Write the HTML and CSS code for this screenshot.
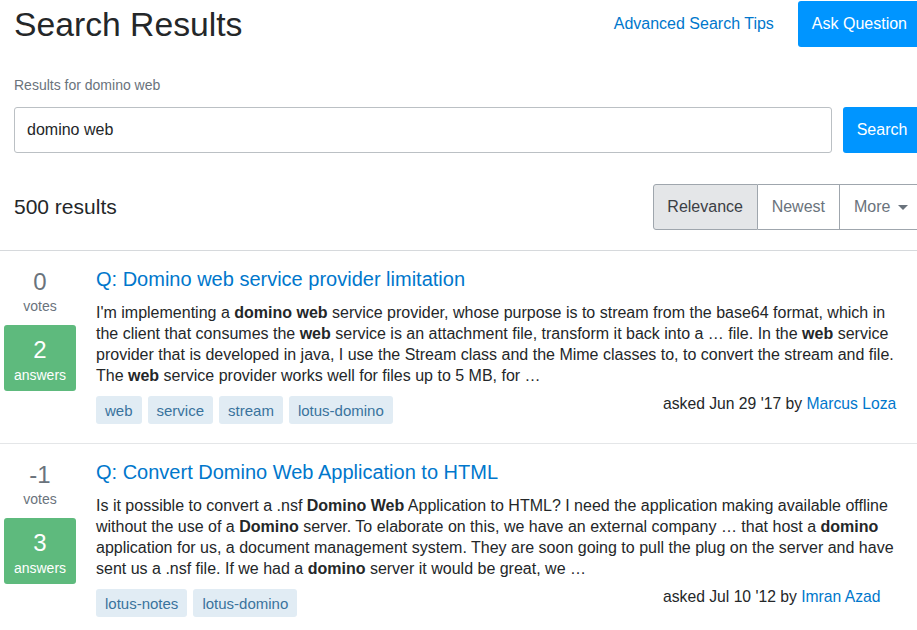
FILE: index.html
```html
<!DOCTYPE html>
<html>
<head>
<meta charset="utf-8">
<link rel="stylesheet" href="styles.css">
</head>
<body>
<div class="page">
  <div class="top">
    <header class="header">
      <h1 class="title">Search Results</h1>
      <div class="header-actions">
        <a class="tips" href="#">Advanced Search Tips</a>
        <a class="btn btn-primary" href="#">Ask Question</a>
      </div>
    </header>
    <div class="results-for">Results for domino web</div>
    <form class="search-form">
      <input class="search-input" type="text" value="domino web">
      <button class="btn btn-primary search-btn" type="button">Search</button>
    </form>
    <div class="count-row">
      <div class="count">500 results</div>
      <div class="sort-group">
        <span class="sort-item active">Relevance</span>
        <span class="sort-item">Newest</span>
        <span class="sort-item more">More <span class="caret"></span></span>
      </div>
    </div>
  </div>

  <div class="results">
    <div class="result">
      <div class="stats">
        <div class="votes-num">0</div>
        <div class="votes-label">votes</div>
        <div class="answers">
          <div class="answers-num">2</div>
          <div class="answers-label">answers</div>
        </div>
      </div>
      <div class="summary">
        <a class="q-title" href="#">Q: Domino web service provider limitation</a>
        <div class="excerpt">I'm implementing a <b>domino web</b> service provider, whose purpose is to stream from the base64 format, which in the client that consumes the <b>web</b> service is an attachment file, transform it back into a … file. In the <b>web</b> service provider that is developed in java, I use the Stream class and the Mime classes to, to convert the stream and file. The <b>web</b> service provider works well for files up to 5 MB, for …</div>
        <div class="meta">
          <div class="tags">
            <span class="tag">web</span>
            <span class="tag">service</span>
            <span class="tag">stream</span>
            <span class="tag">lotus-domino</span>
          </div>
          <div class="asked">asked Jun 29 '17 by <a class="user" href="#">Marcus Loza</a></div>
        </div>
      </div>
    </div>

    <div class="result">
      <div class="stats">
        <div class="votes-num">-1</div>
        <div class="votes-label">votes</div>
        <div class="answers">
          <div class="answers-num">3</div>
          <div class="answers-label">answers</div>
        </div>
      </div>
      <div class="summary">
        <a class="q-title" href="#">Q: Convert Domino Web Application to HTML</a>
        <div class="excerpt">Is it possible to convert a .nsf <b>Domino Web</b> Application to HTML? I need the application making available offline without the use of a <b>Domino</b> server. To elaborate on this, we have an external company … that host a <b>domino</b> application for us, a document management system. They are soon going to pull the plug on the server and have sent us a .nsf file. If we had a <b>domino</b> server it would be great, we …</div>
        <div class="meta">
          <div class="tags">
            <span class="tag">lotus-notes</span>
            <span class="tag">lotus-domino</span>
          </div>
          <div class="asked">asked Jul 10 '12 by <a class="user" href="#">Imran Azad</a></div>
        </div>
      </div>
    </div>
  </div>
</div>
</body>
</html>
```

FILE: styles.css
```css
html, body {
  margin: 0;
  padding: 0;
  background: #fff;
  overflow: hidden;
}
body {
  font-family: "Liberation Sans", Arial, sans-serif;
  color: #242729;
  font-size: 16px;
}
a { text-decoration: none; }

.page {
  width: 921px;
}
.top {
  padding-left: 14px;
}
.header {
  display: flex;
  justify-content: space-between;
  align-items: center;
  padding-top: 1px;
  height: 46px;
}
.title {
  margin: 0;
  font-weight: normal;
  font-size: 33.7px;
  line-height: 40px;
  color: #242729;
}
.header-actions {
  display: flex;
  align-items: center;
  gap: 24px;
}
.tips {
  color: #0077cc;
  font-size: 16px;
}
.btn {
  display: inline-flex;
  align-items: center;
  justify-content: center;
  box-sizing: border-box;
  height: 46px;
  padding: 0 14px;
  font-family: "Liberation Sans", Arial, sans-serif;
  font-size: 16px;
  border-radius: 3px 0 0 3px;
  border: 0;
}
.btn-primary {
  background: #0095ff;
  color: #fff;
}
.results-for {
  margin-top: 29px;
  font-size: 14px;
  line-height: 18px;
  color: #6a737c;
}
.search-form {
  display: flex;
  gap: 11px;
  margin: 13px 0 0;
}
.search-input {
  flex: 1;
  box-sizing: border-box;
  height: 46px;
  border: 1px solid #bbc0c4;
  border-radius: 3px;
  padding: 0 12px;
  font-family: "Liberation Sans", Arial, sans-serif;
  font-size: 16px;
  color: #242729;
  outline: none;
}
.search-btn {
  width: 78px;
}
.count-row {
  display: flex;
  justify-content: space-between;
  align-items: center;
  margin-top: 31px;
  margin-bottom: 20px;
}
.count {
  font-size: 21px;
  color: #242729;
}
.sort-group {
  display: flex;
  height: 46px;
  box-sizing: border-box;
}
.sort-item {
  display: flex;
  align-items: center;
  box-sizing: border-box;
  height: 46px;
  padding: 0 14px;
  border: 1px solid #9fa6ad;
  border-left: 0;
  color: #6a737c;
  font-size: 16px;
}
.sort-item:first-child {
  border-left: 1px solid #9fa6ad;
  border-radius: 3px 0 0 3px;
  width: 105px;
  justify-content: center;
  padding: 0;
}
.sort-item.active {
  background: #e4e6e8;
  color: #3b4045;
}
.sort-item.more {
  width: 81px;
  gap: 8px;
  border-right: 0;
}
.caret {
  display: inline-block;
  width: 0;
  height: 0;
  border-left: 5px solid transparent;
  border-right: 5px solid transparent;
  border-top: 5px solid #6a737c;
}

.results {
  border-top: 1px solid #d6d9dc;
}
.result {
  display: flex;
  gap: 20px;
  padding: 16px 11px 19px 4px;
  border-bottom: 1px solid #e4e6e8;
}
.stats {
  width: 72px;
  flex: none;
  display: flex;
  flex-direction: column;
  align-items: center;
}
.votes-num {
  margin-top: 1px;
  font-size: 24px;
  line-height: 28px;
  color: #6a737c;
}
.votes-label {
  margin-top: 1px;
  font-size: 14px;
  line-height: 18px;
  color: #6a737c;
}
.answers {
  margin-top: 10px;
  width: 72px;
  height: 66px;
  box-sizing: border-box;
  background: #5eba7d;
  border-radius: 3px;
  color: #fff;
  display: flex;
  flex-direction: column;
  align-items: center;
  padding-top: 11px;
}
.answers-num {
  font-size: 24px;
  line-height: 28px;
}
.answers-label {
  margin-top: 2px;
  font-size: 14px;
  line-height: 18px;
}
.summary {
  flex: 1;
  min-width: 0;
}
.q-title {
  display: block;
  font-size: 20px;
  line-height: 24px;
  color: #0077cc;
}
.excerpt {
  margin-top: 11px;
  font-size: 16px;
  line-height: 21px;
  color: #242729;
}
.excerpt b {
  font-weight: bold;
  color: #242729;
}
.meta {
  display: flex;
  justify-content: space-between;
  align-items: flex-start;
  margin-top: 10px;
}
.tags {
  display: flex;
  gap: 6px;
}
.tag {
  display: inline-flex;
  align-items: center;
  height: 28px;
  padding: 0 9px;
  background: #e1ecf4;
  color: #39739d;
  font-size: 15px;
  border-radius: 3px;
}
.asked {
  width: 247px;
  line-height: 18px;
  color: #242729;
  margin-top: -1px;
  font-size: 15.7px;
}
.user {
  color: #0077cc;
}
```
